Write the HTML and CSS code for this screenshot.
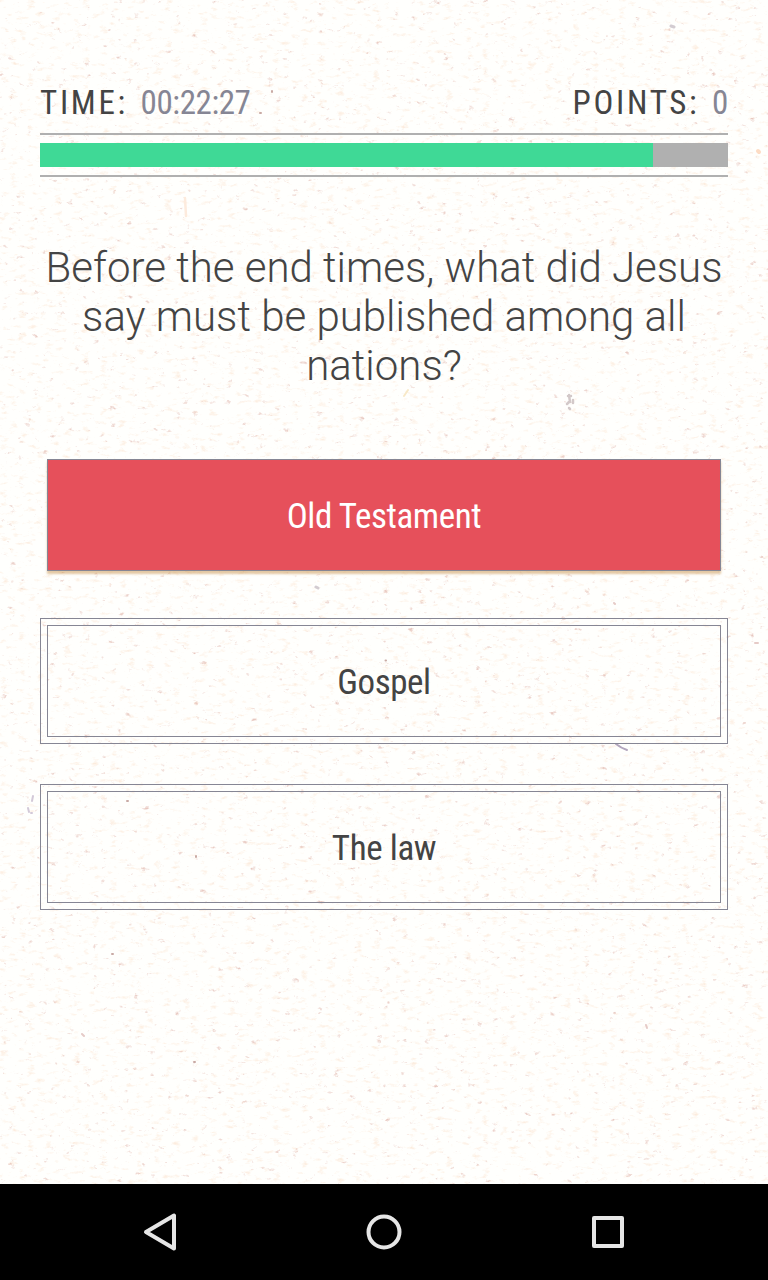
FILE: index.html
```html
<!DOCTYPE html>
<html lang="en">
  <head>
    <meta charset="UTF-8" />
    <meta name="viewport" content="width=device-width, initial-scale=1.0" />
    <title>Bible Quiz</title>
    <link rel="stylesheet" href="styles.css">
  </head>
  <body>
    <!-- Paper texture -->
    <svg class="paper" width="768" height="1184" viewBox="0 0 768 1184" aria-hidden="true">
      <filter id="fibres" x="0" y="0" width="100%" height="100%" color-interpolation-filters="sRGB">
        <feTurbulence type="fractalNoise" baseFrequency="0.11 0.24" numOctaves="4" seed="4" />
        <feColorMatrix values="0 0 0 0 0.98  0 0 0 0 0.86  0 0 0 0 0.76  2.6 0 0 0 -1.53" />
      </filter>
      <filter id="specks" x="0" y="0" width="100%" height="100%" color-interpolation-filters="sRGB">
        <feTurbulence type="fractalNoise" baseFrequency="0.12 0.18" numOctaves="4" seed="21" />
        <feColorMatrix values="0 0 0 0 0.87  0 0 0 0 0.69  0 0 0 0 0.65  0 4.5 0 0 -3.2" />
      </filter>
      <rect width="768" height="1184" filter="url(#fibres)" opacity="0.6" />
      <rect width="768" height="1184" filter="url(#specks)" opacity="0.7" />
      <!-- Larger flecks -->
      <g fill="none" stroke-linecap="round">
        <path d="M616 744q5 4 11 6" stroke="#b3a6bd" stroke-width="2" />
        <path d="M185 198l1 18" stroke="#fdebdd" stroke-width="2.5" />
        <path d="M408 390l-4 6" stroke="#f8e9c8" stroke-width="2" />
        <path d="M568 396h3M569 395l1 7M573 400v3M567 404l2-2M569 408l1 1" stroke="#d3c9c9" stroke-width="2.5" />
        <path d="M28 808l1 4M31 813h1M33 796l-1 5" stroke="#d3c9d8" stroke-width="2" />
        <path d="M758 151l1 1" stroke="#fddcc4" stroke-width="4" />
        <path d="M316 587l2 1M671 26l3 1" stroke="#d3ccd1" stroke-width="3" />
        <path d="M385.500 660.500h.5M194 1062h1M196 856v1M112 954h1M260 113h1M272 91v1M127 801h1" stroke="#c9aaa4" stroke-width="2" />
        <path d="M82 1034l2 2M646 1025l1 3M614 603l1 1M755 643h3" stroke="#e6cbc7" stroke-width="2" />
      </g>
    </svg>

    <main class="quiz">
      <!-- Time and points -->
      <div class="stats">
        <div><span class="label">TIME:</span> <span class="value">00:22:27</span></div>
        <div><span class="label">POINTS:</span> <span class="value">0</span></div>
      </div>

      <div class="progress">
        <div class="progress-track">
          <div class="progress-fill" style="width: 89.1%"></div>
        </div>
      </div>

      <h1 class="question">Before the end times, what did Jesus say must be published among all nations?</h1>

      <!-- Answers -->
      <div class="answers">
        <div class="answer wrong"><button class="answer-btn">Old Testament</button></div>
        <div class="answer"><button class="answer-btn">Gospel</button></div>
        <div class="answer"><button class="answer-btn">The law</button></div>
      </div>
    </main>

    <!-- Android navigation bar -->
    <nav class="nav-bar">
      <svg width="48" height="48" viewBox="0 0 48 48">
        <path d="M38 7.500V40.500L10 24z" />
      </svg>
      <svg width="48" height="48" viewBox="0 0 48 48">
        <circle cx="24" cy="24" r="15.500" />
      </svg>
      <svg width="48" height="48" viewBox="0 0 48 48">
        <rect x="10" y="10" width="28" height="28" />
      </svg>
    </nav>
  </body>
</html>
```
FILE: styles.css
```css
* {
  box-sizing: border-box;
}

body {
  margin: 0;
  height: 1280px;
  display: flex;
  flex-direction: column;
  position: relative;
  overflow: hidden;
  background-color: #fffffd;
  color: #444;
  font-family: Roboto, sans-serif;
}

.paper {
  position: absolute;
  top: 0;
  left: 0;
  z-index: -1;
}

.quiz {
  flex: 1;
  padding: 84px 40px 0;
}

/* Time and points */
.stats {
  display: flex;
  justify-content: space-between;
  height: 49px;
  font-family: "Roboto Condensed", Roboto, sans-serif;
  font-stretch: 75%;
  font-size: 33px;
  line-height: 38px;
}

.label {
  margin-right: 5px;
  letter-spacing: 2.7px;
}

.value {
  letter-spacing: -0.4px;
  color: #868694;
}

/* Progress bar */
.progress {
  height: 44px;
  padding: 8px 0;
  border-top: 2px solid #b0b0b0;
  border-bottom: 2px solid #b0b0b0;
}

.progress-track {
  height: 24px;
  background-color: #b0b0b0;
}

.progress-fill {
  height: 100%;
  background-color: #3fd996;
}

.question {
  margin: 66px 0 62px;
  font-size: 42px;
  font-weight: 300;
  line-height: 49px;
  text-align: center;
}

/* Answer buttons */
.answers {
  display: flex;
  flex-direction: column;
  gap: 40px;
}

.answer {
  height: 126px;
  padding: 6px;
  border: 1px solid #868694;
}

.answer-btn {
  display: block;
  width: 100%;
  height: 100%;
  padding: 2px 0 0;
  border: 1px solid #868694;
  background: none;
  color: #444;
  font-family: "Roboto Condensed", Roboto, sans-serif;
  font-stretch: 75%;
  font-size: 35px;
  letter-spacing: -0.4px;
}

.wrong {
  border-color: transparent;
}

.wrong .answer-btn {
  background-color: #e6505b;
  color: #fff;
  box-shadow: 0 3px 2px rgba(200, 145, 75, 0.5);
}

/* Bottom navigation */
.nav-bar {
  display: flex;
  justify-content: center;
  align-items: center;
  gap: 176px;
  height: 96px;
  background-color: #000;
}

.nav-bar svg {
  fill: none;
  stroke: #e6e6e6;
  stroke-width: 4;
  stroke-linejoin: round;
}
```
